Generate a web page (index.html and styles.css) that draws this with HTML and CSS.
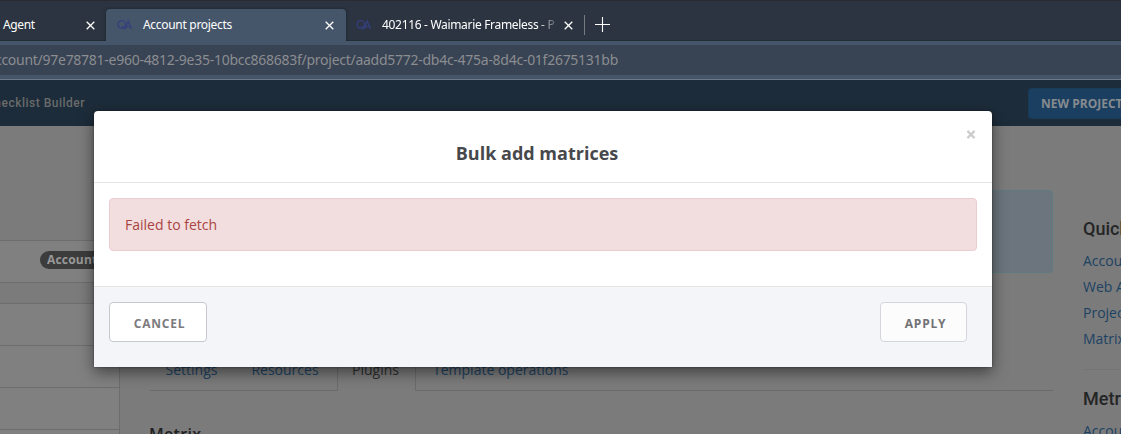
FILE: index.html
```html
<!DOCTYPE html>
<html lang="en">
<head>
<meta charset="utf-8">
<title>Account projects</title>
<link rel="stylesheet" href="styles.css">
</head>
<body>
<div class="browser">
  <div class="tabstrip">
    <div class="tab tab-first"><span class="tab-title">Agent</span><svg class="close" viewBox="0 0 9 9"><path d="M.7.7l7.6 7.6M8.3.7L.7 8.3"/></svg></div>
    <div class="tab tab-active"><svg class="favicon" viewBox="0 0 16 12"><circle cx="4.8" cy="5.5" r="3.8"/><path d="M5 7l3 3M8.2 10l3-8 3.4 8M9.8 7.6h3.6"/></svg><span class="tab-title">Account projects</span><svg class="close" viewBox="0 0 9 9"><path d="M.7.7l7.6 7.6M8.3.7L.7 8.3"/></svg></div>
    <div class="tab tab-last"><svg class="favicon" viewBox="0 0 16 12"><circle cx="4.8" cy="5.5" r="3.8"/><path d="M5 7l3 3M8.2 10l3-8 3.4 8M9.8 7.6h3.6"/></svg><span class="tab-title">402116 - Waimarie Frameless - P</span><svg class="close" viewBox="0 0 9 9"><path d="M.7.7l7.6 7.6M8.3.7L.7 8.3"/></svg></div>
    <span class="tab-divider"></span>
    <svg class="plus" viewBox="0 0 15 15"><path d="M7.5 0v15M0 7.5h15"/></svg>
  </div>
  <div class="toolbar"><div class="url"><span class="url-text">account/97e78781-e960-4812-9e35-10bcc868683f/project/aadd5772-db4c-475a-8d4c-01f2675131bb</span></div></div>
</div>
<header class="appbar">
  <div class="nav"><span class="nav-text">Checklist Builder</span></div>
  <div class="new-project"><span class="new-text">NEW PROJECT</span></div>
</header>
<div class="page">
  <aside class="sidebar">
    <div class="side-row account"><span class="badge"><span class="badge-text">Account</span></span></div>
    <div class="side-row spacer"></div>
    <div class="side-row"></div>
    <div class="side-row"></div>
    <div class="side-row"></div>
    <div class="side-row last"></div>
  </aside>
  <main class="content">
    <div class="info"></div>
    <nav class="tabs">
      <div class="link-tabs"><span class="tab-link settings">Settings</span><span class="tab-link resources">Resources</span></div>
      <div class="current-tab"><span class="tab-link plugins">Plugins</span></div>
      <div class="link-tabs rest"><span class="tab-link template">Template operations</span></div>
    </nav>
    <div class="section-title"><span class="metrix">Metrix</span></div>
  </main>
  <aside class="quick">
    <h3 class="quick-title"><span class="quick-h">Quick links</span></h3>
    <div class="quick-link"><span class="ql">Accounts</span></div>
    <div class="quick-link"><span class="ql">Web App</span></div>
    <div class="quick-link"><span class="ql">Projects</span></div>
    <div class="quick-link"><span class="ql">Matrix</span></div>
    <hr class="quick-rule">
    <h3 class="quick-title"><span class="quick-h">Metrix</span></h3>
    <div class="quick-link"><span class="ql">Accounts</span></div>
  </aside>
</div>
<section class="modal">
  <div class="modal-header">
    <h2 class="modal-title"><span class="title-text">Bulk add matrices</span></h2>
    <svg class="modal-close" viewBox="0 0 9 9"><path d="M.9.9l7.2 7.2M8.1.9L.9 8.1"/></svg>
  </div>
  <div class="modal-body"><div class="error"><span class="error-text">Failed to fetch</span></div></div>
  <div class="modal-footer">
    <div class="btn cancel"><span class="btn-text">CANCEL</span></div>
    <div class="btn apply"><span class="btn-text">APPLY</span></div>
  </div>
</section>
</body>
</html>
```
FILE: styles.css
```css
* { box-sizing: border-box; }
body { margin: 0; width: 1121px; height: 434px; overflow: hidden; position: relative; background: #7b7b7b; font-family: "Open Sans", sans-serif; white-space: nowrap; }
h2, h3 { margin: 0; }
svg { display: block; flex: none; fill: none; }

.tabstrip { height: 41px; display: flex; align-items: flex-end; background: #2b3440; border-top: 1px solid #2b2a31; border-bottom: 1px solid #242c36; color: #fff; font: 12px/16px "Noto Sans", sans-serif; }
.tab { height: 32px; display: flex; align-items: center; flex: none; }
.tab-first { width: 106px; padding: 2px 11px 0 3px; justify-content: space-between; }
.tab-first .tab-title { letter-spacing: -.35px; }
.tab-active { width: 240px; margin-bottom: -1px; padding: 0 12px 0 11px; background: #45556a; border-radius: 4px 4px 0 0; box-shadow: 0 0 3px #18202a; }
.tab-active .tab-title { width: 183px; letter-spacing: -.3px; }
.tab-last { width: 238px; padding: 2px 0 0 10px; }
.tab-last .tab-title { width: 178px; margin-right: 4px; overflow: hidden; letter-spacing: -.32px; -webkit-mask-image: linear-gradient(90deg, #000 155px, transparent 178px); mask-image: linear-gradient(90deg, #000 155px, transparent 178px); }
.favicon { width: 16px; height: 12px; margin-right: 10px; stroke: #353f7d; stroke-width: 1.3; }
.close { width: 9px; height: 9px; stroke: #fff; stroke-width: 1.3; }
.tab-divider { width: 1px; height: 20px; margin-bottom: 5px; background: #777c83; }
.plus { width: 15px; height: 15px; margin: 0 0 8px 10px; stroke: #fff; stroke-width: 1.1; }
.toolbar { height: 39px; padding: 4px 0; background: #45556a; border-bottom: 1px solid #707985; position: relative; }
.url { height: 30px; width: 1121px; background: #384354; padding-right: 503px; display: flex; justify-content: flex-end; align-items: center; overflow: hidden; color: #8b8d90; font: 14px/30px "Noto Sans", sans-serif; letter-spacing: -.27px; }
.url-text { flex: none; }

.appbar { height: 46px; display: flex; justify-content: space-between; background: #1d2c3a; }
.nav { width: 85px; display: flex; justify-content: flex-end; overflow: hidden; color: #686a6b; font: 500 12px/46px Roboto, sans-serif; letter-spacing: .5px; }
.new-project { width: 93px; height: 31px; margin-top: 8px; padding-left: 12px; overflow: hidden; background: #1b3f60; border: 1px solid #1a3b58; border-right: 0; border-radius: 4px 0 0 4px; color: #868b90; font-weight: 700; font-size: 12px; line-height: 30px; }

.page { height: 308px; display: flex; overflow: hidden; }
.sidebar { width: 120px; flex: none; padding-top: 114px; border-right: 1px solid #6d6d6d; }
.side-row { height: 42px; background: #808080; border-top: 1px solid #6d6d6d; }
.side-row.spacer { height: 21px; background: #7b7b7b; }
.side-row.last { height: 5px; }
.account { padding: 10px 0 0 40px; }
.badge { display: block; width: 79px; height: 18px; padding-left: 7px; border-radius: 9px; background: #3c3c3c; color: #999; font-weight: 700; font-size: 12px; line-height: 18px; letter-spacing: .2px; }
.content { width: 933px; flex: none; padding: 64px 0 0 30px; }
.info { height: 83px; border: 1px solid #5e7c80; border-radius: 4px; background: #6c757d; }
.tabs { height: 42px; margin-top: 76px; display: flex; font-size: 14px; line-height: 42px; }
.link-tabs { width: 187px; border-bottom: 1px solid #6b6b6b; padding-left: 15.5px; color: #1c4263; }
.resources { margin-left: 34px; }
.current-tab { width: 79px; padding-left: 14px; border: 1px solid #6b6b6b; border-width: 0 1px; color: #2e2e2e; }
.rest { flex: 1; padding-left: 17px; }
.section-title { padding-top: 32px; margin-left: -1px; color: #202122; font: 600 16px/22px "Open Sans", sans-serif; letter-spacing: .3px; }
.quick { flex: 1; padding: 90px 0 0 30px; overflow: hidden; }
.quick-title { color: #242526; font: 500 18px/26px Roboto, sans-serif; }
.quick-link { height: 26px; color: #1c4263; font-size: 14px; line-height: 26px; }
.quick-title + .quick-link { margin-top: 6px; }
.quick-rule { height: 1px; margin: 17px 0 16px; border: 0; background: #747474; }

.modal { position: absolute; left: 94px; top: 111px; width: 898px; height: 256px; border-radius: 4px 4px 0 0; overflow: hidden; background: #fff; box-shadow: 0 5px 15px rgba(0, 0, 0, .5), 0 0 2px rgba(0, 0, 0, .5); }
.modal-header { height: 72px; padding-top: 30px; border-bottom: 1px solid #e5e5e5; position: relative; }
.modal-title { text-align: center; padding-right: 12px; color: #47484c; font: 700 18px/25px "Open Sans", sans-serif; }
.modal-close { position: absolute; left: 872px; top: 19px; width: 10px; height: 9px; stroke: #ccc; stroke-width: 2.2; }
.modal-body { height: 103px; padding: 15px; }
.error { height: 53px; padding-left: 15px; background: #f2dede; border: 1px solid #ebccd1; border-radius: 4px; color: #a94442; font-size: 14px; line-height: 52px; }
.modal-footer { height: 81px; padding: 15px 25px 0 15px; display: flex; justify-content: space-between; background: #f4f5f8; border-top: 1px solid #e5e5e5; }
.btn { height: 40px; text-align: center; border: 1px solid #c7c7cf; border-radius: 4px; color: #7b7b7d; font-weight: 700; font-size: 12px; line-height: 41px; letter-spacing: .75px; }
.cancel { width: 98px; padding-left: 3px; background: #fff; }
.apply { width: 87px; padding-left: 4px; background: #fcfcfc; border-color: #d5d5dd; color: #717175; }
```
